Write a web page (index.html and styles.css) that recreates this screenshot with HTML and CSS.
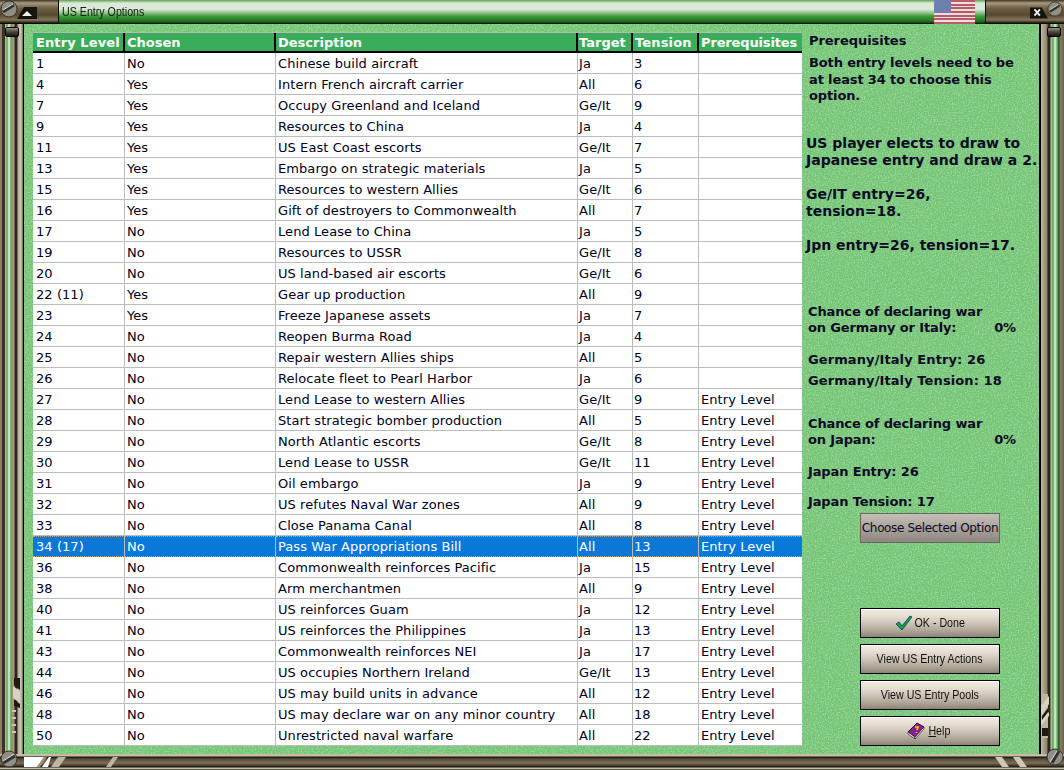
FILE: index.html
```html
<!DOCTYPE html>
<html lang="en">
<head>
<meta charset="utf-8">
<title>US Entry Options</title>
<link rel="stylesheet" href="styles.css">
</head>
<body>
<div class="window">
  <header class="titlebar">
    <div class="cap cap-left">
      <svg class="screw screw-tl" width="18" height="18" viewBox="0 0 18 18"><circle cx="9" cy="9" r="8" fill="#8f8f85" stroke="#3a352a"/><path d="M3 12 L14 5" stroke="#33332c" stroke-width="3"/><path d="M3 10 L13 4" stroke="#d8d8cc" stroke-width="1"/></svg>
      <svg class="capbtn" width="20" height="12" viewBox="0 0 20 12"><path d="M0 12 L7 0 H20 V12 Z" fill="#151510"/><path d="M5 9 L10 4 L15 9 Z" fill="#f4f2ea"/></svg>
    </div>
    <div class="title"><span class="narrow-left">US Entry Options</span></div>
    <svg class="flag" width="41" height="24" viewBox="0 0 41 24">
      <rect width="41" height="24" fill="#e8dcdc"/>
      <g fill="#b85a68"><rect y="0" width="41" height="2"/><rect y="4" width="41" height="2"/><rect y="7" width="41" height="2"/><rect y="11" width="41" height="2"/><rect y="15" width="41" height="2"/><rect y="18" width="41" height="2"/><rect y="22" width="41" height="2"/></g>
      <rect width="17" height="13" fill="#6f7fae"/>
    </svg>
    <div class="cap cap-right">
      <svg class="capbtn-r" width="18" height="12" viewBox="0 0 20 12"><path d="M0 0 H13 L20 12 H0 Z" fill="#151510"/><path d="M5 2 L11 9 M11 2 L5 9" stroke="#f4f2ea" stroke-width="2"/></svg>
      <svg class="screw screw-tr" width="16" height="16" viewBox="0 0 18 18"><circle cx="9" cy="9" r="8" fill="#8f8f85" stroke="#3a352a"/><path d="M3 12 L14 5" stroke="#33332c" stroke-width="3"/><path d="M3 10 L13 4" stroke="#d8d8cc" stroke-width="1"/></svg>
    </div>
  </header>

  <div class="middle">
    <div class="rail rail-left">
      <span class="knob"></span>
      <svg class="rail-art art-left" width="24" height="60" viewBox="0 0 24 60" aria-hidden="true">
        <path d="M14 0 H20 V12 L14 7 Z M14 22 L20 26 V30 L14 28 Z" fill="#1e1a12"/>
        <path d="M13 8 L20 13 V25 L13 20 Z" fill="#d8d2c0"/>
        <path d="M12 33 H16 M12 40 H16 M12 47 H16 M12 54 H16" stroke="#cfc8b4" stroke-width="2"/>
      </svg>
    </div>

    <main class="felt">
      <svg class="noise" width="1016" height="730" aria-hidden="true">
        <filter id="grain"><feTurbulence type="fractalNoise" baseFrequency="0.7" numOctaves="2" seed="4"/><feColorMatrix values="0 0 0 0 1  0 0 0 0 1  0 0 0 0 1  3.2 0 0 0 -1.35"/></filter>
        <rect width="1016" height="730" filter="url(#grain)"/>
      </svg>

      <table class="grid">
        <colgroup><col class="c1"><col class="c2"><col class="c3"><col class="c4"><col class="c5"><col class="c6"></colgroup>
        <thead><tr><th>Entry Level</th><th>Chosen</th><th>Description</th><th>Target</th><th>Tension</th><th>Prerequisites</th></tr></thead>
        <tbody>
          <tr><td>1</td><td>No</td><td>Chinese build aircraft</td><td>Ja</td><td>3</td><td></td></tr>
          <tr><td>4</td><td>Yes</td><td>Intern French aircraft carrier</td><td>All</td><td>6</td><td></td></tr>
          <tr><td>7</td><td>Yes</td><td>Occupy Greenland and Iceland</td><td>Ge/It</td><td>9</td><td></td></tr>
          <tr><td>9</td><td>Yes</td><td>Resources to China</td><td>Ja</td><td>4</td><td></td></tr>
          <tr><td>11</td><td>Yes</td><td>US East Coast escorts</td><td>Ge/It</td><td>7</td><td></td></tr>
          <tr><td>13</td><td>Yes</td><td>Embargo on strategic materials</td><td>Ja</td><td>5</td><td></td></tr>
          <tr><td>15</td><td>Yes</td><td>Resources to western Allies</td><td>Ge/It</td><td>6</td><td></td></tr>
          <tr><td>16</td><td>Yes</td><td>Gift of destroyers to Commonwealth</td><td>All</td><td>7</td><td></td></tr>
          <tr><td>17</td><td>No</td><td>Lend Lease to China</td><td>Ja</td><td>5</td><td></td></tr>
          <tr><td>19</td><td>No</td><td>Resources to USSR</td><td>Ge/It</td><td>8</td><td></td></tr>
          <tr><td>20</td><td>No</td><td>US land-based air escorts</td><td>Ge/It</td><td>6</td><td></td></tr>
          <tr><td>22 (11)</td><td>Yes</td><td>Gear up production</td><td>All</td><td>9</td><td></td></tr>
          <tr><td>23</td><td>Yes</td><td>Freeze Japanese assets</td><td>Ja</td><td>7</td><td></td></tr>
          <tr><td>24</td><td>No</td><td>Reopen Burma Road</td><td>Ja</td><td>4</td><td></td></tr>
          <tr><td>25</td><td>No</td><td>Repair western Allies ships</td><td>All</td><td>5</td><td></td></tr>
          <tr><td>26</td><td>No</td><td>Relocate fleet to Pearl Harbor</td><td>Ja</td><td>6</td><td></td></tr>
          <tr><td>27</td><td>No</td><td>Lend Lease to western Allies</td><td>Ge/It</td><td>9</td><td>Entry Level</td></tr>
          <tr><td>28</td><td>No</td><td>Start strategic bomber production</td><td>All</td><td>5</td><td>Entry Level</td></tr>
          <tr><td>29</td><td>No</td><td>North Atlantic escorts</td><td>Ge/It</td><td>8</td><td>Entry Level</td></tr>
          <tr><td>30</td><td>No</td><td>Lend Lease to USSR</td><td>Ge/It</td><td>11</td><td>Entry Level</td></tr>
          <tr><td>31</td><td>No</td><td>Oil embargo</td><td>Ja</td><td>9</td><td>Entry Level</td></tr>
          <tr><td>32</td><td>No</td><td>US refutes Naval War zones</td><td>All</td><td>9</td><td>Entry Level</td></tr>
          <tr><td>33</td><td>No</td><td>Close Panama Canal</td><td>All</td><td>8</td><td>Entry Level</td></tr>
          <tr class="selected"><td>34 (17)</td><td>No</td><td>Pass War Appropriations Bill</td><td>All</td><td>13</td><td>Entry Level</td></tr>
          <tr><td>36</td><td>No</td><td>Commonwealth reinforces Pacific</td><td>Ja</td><td>15</td><td>Entry Level</td></tr>
          <tr><td>38</td><td>No</td><td>Arm merchantmen</td><td>All</td><td>9</td><td>Entry Level</td></tr>
          <tr><td>40</td><td>No</td><td>US reinforces Guam</td><td>Ja</td><td>12</td><td>Entry Level</td></tr>
          <tr><td>41</td><td>No</td><td>US reinforces the Philippines</td><td>Ja</td><td>13</td><td>Entry Level</td></tr>
          <tr><td>43</td><td>No</td><td>Commonwealth reinforces NEI</td><td>Ja</td><td>17</td><td>Entry Level</td></tr>
          <tr><td>44</td><td>No</td><td>US occupies Northern Ireland</td><td>Ge/It</td><td>13</td><td>Entry Level</td></tr>
          <tr><td>46</td><td>No</td><td>US may build units in advance</td><td>All</td><td>12</td><td>Entry Level</td></tr>
          <tr><td>48</td><td>No</td><td>US may declare war on any minor country</td><td>All</td><td>18</td><td>Entry Level</td></tr>
          <tr><td>50</td><td>No</td><td>Unrestricted naval warfare</td><td>All</td><td>22</td><td>Entry Level</td></tr>
        </tbody>
      </table>

      <aside class="side">
        <p class="txt t-pre">Prerequisites</p>
        <p class="txt t-both">Both entry levels need to be<br>at least 34 to choose this<br>option.</p>
        <p class="big t-us">US player elects to draw to<br>Japanese entry and draw a 2.</p>
        <p class="big t-ge">Ge/IT entry=26,<br>tension=18.</p>
        <p class="big t-jp">Jpn entry=26, tension=17.</p>
        <div class="txt chance t-ch1"><span>Chance of declaring war</span><div class="chance-row"><span>on Germany or Italy:</span><span class="pct">0%</span></div></div>
        <p class="txt wide t-ge1">Germany/Italy Entry: 26</p>
        <p class="txt wide t-ge2">Germany/Italy Tension: 18</p>
        <div class="txt chance t-ch2"><span>Chance of declaring war</span><div class="chance-row"><span>on Japan:</span><span class="pct">0%</span></div></div>
        <p class="txt t-ja1">Japan Entry: 26</p>
        <p class="txt t-ja2">Japan Tension: 17</p>
        <button class="choose">Choose Selected Option</button>
        <div class="actions">
          <button class="action"><svg class="icon-ok" width="18" height="16" viewBox="0 0 18 16"><path d="M1 9 L4 7 L7 11 L15 1 L17 2 L7 15 Z" fill="#12a818" stroke="#0a2f9a" stroke-width=".8"/></svg><span class="narrow">OK - Done</span></button>
          <button class="action"><span class="narrow">View US Entry Actions</span></button>
          <button class="action"><span class="narrow">View US Entry Pools</span></button>
          <button class="action"><svg class="icon-help" width="18" height="17" viewBox="0 0 18 17"><path d="M1 10 L10 1 L17 5 L8 15 Z" fill="#8a1f8e" stroke="#2c0a30"/><path d="M1 10 L8 15 V17 L1 12 Z" fill="#e8e4dc" stroke="#2c0a30" stroke-width=".6"/><path d="M8 15 L17 5 V7 L8 17 Z" fill="#e8e4dc" stroke="#2c0a30" stroke-width=".6"/><path d="M8 5 L11 5 L10 8 M9.5 10 v1" stroke="#f2d21e" stroke-width="1.6" fill="none"/></svg><span class="narrow"><u>H</u>elp</span></button>
        </div>
      </aside>
    </main>

    <div class="rail rail-right">
      <span class="knob"></span>
      <svg class="rail-art art-right" width="24" height="60" viewBox="0 0 24 60" aria-hidden="true">
        <path d="M2 0 H8 V44 H2 Z" fill="#bdb5a0"/>
        <path d="M1 12 L9 2 V10 L1 22 Z M1 26 L9 18 V22 L1 32 Z" fill="#d8d2c0"/>
        <path d="M2 22 L8 14 V18 L2 26 Z M2 34 H8 V42 H2 Z" fill="#1e1a12"/>
      </svg>
    </div>
  </div>

  <footer class="bottombar">
    <svg width="94" height="16" viewBox="0 0 94 16" aria-hidden="true">
      <path d="M0 3 H20 L13 13 H0 Z M27 3 H25 L18 13 H24 Z" fill="#fff"/>
      <path d="M13 13 L20 3 H23 L16 13 Z" fill="#9a917c"/>
      <path d="M27 13 L34 3 H42 L35 13 Z M82 13 L89 3 H94 L87 13 Z" fill="#bdb5a0"/>
    </svg>
    <svg width="42" height="16" viewBox="0 0 42 16" aria-hidden="true">
      <path d="M0 3 H7 L14 13 H7 Z M18 3 H25 L32 13 H25 Z" fill="#cfc8b4"/>
    </svg>
  </footer>

  <svg class="screw corner-bl" width="18" height="18" viewBox="0 0 18 18"><circle cx="9" cy="9" r="8" fill="#8f8f85" stroke="#3a352a"/><path d="M3 13 L15 6" stroke="#33332c" stroke-width="3"/><path d="M3 11 L14 4" stroke="#d8d8cc" stroke-width="1"/></svg>
  <svg class="screw corner-br" width="18" height="18" viewBox="0 0 18 18"><circle cx="9" cy="9" r="8" fill="#8f8f85" stroke="#3a352a"/><path d="M6 15 L13 3" stroke="#33332c" stroke-width="3"/><path d="M4 14 L11 3" stroke="#d8d8cc" stroke-width="1"/></svg>
</div>
</body>
</html>
```

FILE: styles.css
```css
* { box-sizing: border-box; }
html, body { margin: 0; padding: 0; }
body { width: 1064px; height: 770px; overflow: hidden; background: #000; font-family: "DejaVu Sans", Verdana, sans-serif; }

.window { position: relative; width: 1064px; height: 770px; display: flex; flex-direction: column; }

/* title bar */
.titlebar { flex: 0 0 24px; height: 24px; display: flex; align-items: stretch; background: linear-gradient(#5c9e54 0, #dbe8d6 3px, #dde9d9 9px, #8fc388 13px, #3f9a3e 16px, #24761f 21px, #123c10 23px, #000 24px); }
.cap { position: relative; background: linear-gradient(#3a3224 0, #a89a7e 3px, #6e5f45 8px, #57492f 15px, #85765a 20px, #1a160e 23px, #000 24px); }
.cap-left { flex: 0 0 59px; border-right: 1px solid #0c0c08; }
.cap-right { flex: 0 0 79px; border-left: 1px solid #0c0c08; margin-left: 10px; }
.title { flex: 1; padding: 4px 0 0 3px; font: 13px/16px "Liberation Sans", Arial, sans-serif; color: #10200f; }
.narrow-left { display: inline-block; transform: scaleX(.82); transform-origin: left center; }
.narrow { display: inline-block; transform: scaleX(.82); }
.flag { flex: 0 0 41px; }
.screw { position: absolute; }
.screw-tl { left: 0; top: 0; }
.screw-tr { right: 1px; top: 1px; }
.capbtn { position: absolute; left: 17px; top: 7px; }
.capbtn-r { position: absolute; right: 16px; top: 7px; }

/* rails and felt */
.middle { flex: 1; display: flex; min-height: 0; }
.rail { position: relative; flex: 0 0 24px; }
.rail-left { background: linear-gradient(90deg, #8a8068 0, #8a8068 2px, #3a3224 2px, #3a3224 5px, #d0c8b4 5px, #4fa84c 7px, #e8f2e4 9px, #4fa84c 11px, #9a9078 12px, #a69c84 14px, #2e281c 15px, #2e281c 17px, #b8b09c 18px, #d0c8b4 21px, #6a6048 23px, #000 23px); }
.rail-right { background: linear-gradient(90deg, #000 0, #000 1px, #c0b8a4 1px, #8c8268 7px, #2e281c 8px, #2e281c 10px, #c8c0ac 11px, #4fa84c 13px, #e8f2e4 15px, #3c8c3a 18px, #1e3c1a 19px, #8a8068 20px, #6a6048 24px); }
.knob { position: absolute; top: 3px; left: 5px; width: 14px; height: 10px; border-radius: 2px; background: linear-gradient(#9a9486, #4a443a 50%, #1c1a14); border: 1px solid #000; }
.rail-right .knob { left: 7px; }
.rail-art { position: absolute; left: 0; }
.art-left { bottom: 16px; }
.art-right { bottom: 0; }
.felt { position: relative; flex: 1; display: flex; padding: 8px 0 0 9px; background: #74c575; border-right: 1px solid #000; overflow: hidden; }
.noise { position: absolute; left: 0; top: 0; opacity: .28; }

/* table */
.grid { position: relative; flex: 0 0 769px; width: 769px; height: 714px; table-layout: fixed; border-collapse: separate; border-spacing: 0; background: #fff; border-top: 1px solid #b8b8b8; font-size: 13px; color: #00001c; letter-spacing: .07px; }
.c1 { width: 92px; } .c2 { width: 151px; } .c3 { width: 302px; } .c4 { width: 55px; } .c5 { width: 66px; } .c6 { width: 103px; }
.grid th { height: 20px; padding: 0 0 0 2px; background: #39ad5a; color: #fff; font-weight: bold; text-align: left; letter-spacing: 0; border-right: 2px solid #000; border-bottom: 2px solid #000; white-space: nowrap; overflow: hidden; }
.grid th:first-child { padding-left: 3px; letter-spacing: .1px; }
.grid th:last-child { border-right: 0; letter-spacing: -.15px; }
.grid td { height: 21px; padding: 0 0 0 2px; border-right: 1px solid #bcbcbc; border-bottom: 1px solid #bcbcbc; white-space: nowrap; overflow: hidden; }
.grid td:first-child { padding-left: 3px; }
.grid td:nth-child(4), .grid td:nth-child(5), .grid th:nth-child(4) { padding-left: 1px; }
.grid th:nth-child(5) { letter-spacing: .15px; }
.grid td:last-child { border-right: 0; }
.selected td { background: #0a78d7; color: #fff; border-top: 1px dotted #c9a35a; border-bottom: 1px dotted #c9a35a; }

/* side panel */
.side { position: relative; flex: 1; display: flex; flex-direction: column; padding-left: 7px; color: #0c0a24; }
.side p { margin: 0; }
.txt { font-size: 13px; line-height: 16px; font-weight: bold; letter-spacing: -.13px; }
.big { font-size: 14px; line-height: 17px; font-weight: bold; margin-left: -3px !important; }
.wide { letter-spacing: .1px; }
.t-pre { line-height: 17px; letter-spacing: -.05px; }
.t-both { margin-top: 6px !important; line-height: 16.5px; }
.t-us { margin-top: 30px !important; }
.t-ge { margin-top: 17px !important; }
.t-jp { margin-top: 17px !important; }
.chance { position: relative; margin-left: -1px; width: 208px; }
.chance-row { display: flex; justify-content: space-between; }
.t-ch1 { margin-top: 50px; }
.t-ge1 { margin-top: 16px !important; margin-left: -1px !important; }
.t-ge2 { margin-top: 5px !important; margin-left: -1px !important; }
.t-ch2 { margin-top: 27px; }
.t-ja1 { margin-top: 16px !important; margin-left: -1px !important; }
.t-ja2 { margin-top: 14px !important; margin-left: -1px !important; }
.choose { flex: 0 0 30px; width: 140px; margin: 3px 0 0 51px; padding: 0; background: linear-gradient(#c6bfb8, #8e8680); border: 1px solid #6a6660; font: 12px "DejaVu Sans", Verdana, sans-serif; letter-spacing: -.35px; color: #0c0a24; white-space: nowrap; }
.actions { display: flex; flex-direction: column; gap: 6px; margin: 65px 0 0 51px; }
.action { display: flex; align-items: center; justify-content: center; width: 140px; height: 30px; padding: 0; border: 1px solid #000; background: linear-gradient(#f2ece2 0, #e8e0d4 22%, #d8d0c4 40%, #c0b8aa 62%, #a89f90 82%, #8c8474 100%); font: 13px "Liberation Sans", Arial, sans-serif; color: #14120e; box-shadow: inset 0 1px 0 #fff; white-space: nowrap; }
.icon-ok { margin: 0 -4px 0 5px; }
.icon-help { margin-right: 1px; }

/* bottom */
.bottombar { flex: 0 0 16px; height: 16px; display: flex; justify-content: space-between; padding: 0 27px 0 24px; background: linear-gradient(#c4bca8 0, #c4bca8 2px, #15120c 3px, #574c38 5px, #7a6e54 9px, #3c3424 12px, #15120c 13px, #c4bca8 14px, #c4bca8 15px, #000 16px); }
.corner-bl { left: 0; bottom: 2px; }
.corner-br { right: 0; bottom: 4px; }
```
